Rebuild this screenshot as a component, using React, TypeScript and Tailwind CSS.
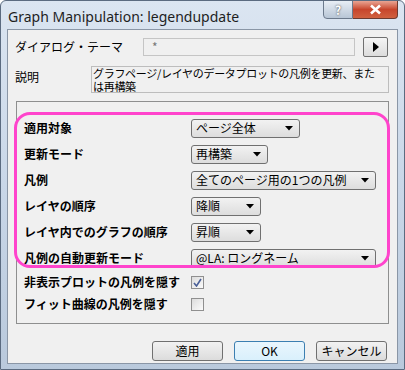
import React from 'react';

const jp = { fontFamily: '"Noto Sans CJK JP", "Liberation Sans", sans-serif' };

function Dropdown({ value, width }: { value: string; width: string }) {
  return (
    <div
      className={`${width} h-[19px] flex items-center justify-between pl-[4px] pr-[6px] rounded-[3px] border border-[#707070] bg-gradient-to-b from-[#f2f2f2] to-[#dddddd] text-[12px] leading-none text-black`}
    >
      <span>{value}</span>
      <svg width="8" height="5" viewBox="0 0 8 5">
        <path d="M0 0 H8 L4 4.5 Z" fill="#000" />
      </svg>
    </div>
  );
}

function Row({ label, h = 'h-[26px]', children }: { label: string; h?: string; children: React.ReactNode }) {
  return (
    <div className={`${h} flex items-center`}>
      <div className="w-[167px] text-[12px] font-bold text-black">{label}</div>
      {children}
    </div>
  );
}

function Check({ checked }: { checked?: boolean }) {
  return (
    <div className="w-[13px] h-[13px] border border-[#8f8f8f] bg-gradient-to-br from-[#dcdcdc] to-[#fbfbfb] flex items-center justify-center">
      {checked && (
        <svg width="9" height="9" viewBox="0 0 9 9">
          <path d="M1 5 L3.5 8 L8 1" stroke="#4a5f97" strokeWidth="1.6" fill="none" />
        </svg>
      )}
    </div>
  );
}

function Btn({ label, primary }: { label: string; primary?: boolean }) {
  return (
    <div
      className={`w-[71px] h-[20px] flex items-center justify-center rounded-[3px] border text-[12px] text-black bg-gradient-to-b ${
        primary ? 'border-[#3c7fb1] from-[#eaf6fd] to-[#d9f0fc]' : 'border-[#707070] from-[#f2f2f2] to-[#dcdcdc]'
      }`}
    >
      {label}
    </div>
  );
}

export default function App() {
  return (
    <div
      className="w-[405px] h-[370px] relative overflow-hidden rounded-t-[6px] bg-gradient-to-b from-[#dbe5f1] via-[#c9d7e8] to-[#b9c9dc] border border-[#5b6b80]"
      style={jp}
    >
      {/* title bar */}
      <div className="h-[28px] flex items-start justify-between">
        <div className="pl-[7px] pt-[5px] text-[14px] text-[#1e1e1e]" style={{ fontFamily: '"Noto Sans", "Liberation Sans", sans-serif' }}>
          Graph Manipulation: legendupdate
        </div>
        <div className="flex mr-[6px] -mt-px">
          <div className="w-[30px] h-[19px] flex items-center justify-center rounded-bl-[4px] border border-[#6c7a8c] bg-gradient-to-b from-[#e8eef5] to-[#b8c6d6] text-[12px] font-bold text-white" style={{ textShadow: '0 0 2px #333' }}>
            ?
          </div>
          <div className="w-[45px] h-[19px] flex items-center justify-center rounded-br-[4px] border border-l-0 border-[#6c3a30] bg-gradient-to-b from-[#e8a493] via-[#c7452c] to-[#d0603f]">
            <svg width="13" height="11" viewBox="0 0 13 11">
              <path d="M2 1.5 L11 9.5 M11 1.5 L2 9.5" stroke="#fff" strokeWidth="2.6" />
            </svg>
          </div>
        </div>
      </div>

      {/* client area */}
      <div className="mx-[6px] h-[335px] bg-[#f0f0f0] border border-[#8a96a6] flex flex-col">
        {/* theme / description */}
        <div className="px-[7px] pt-[7px]">
          <div className="flex items-center h-[20px]">
            <div className="w-[128px] text-[12px] text-black">ダイアログ・テーマ</div>
            <div className="w-[212px] h-[18px] border border-[#c5c5c5] bg-[#f0f0f0] flex items-center pl-[8px] text-[12px] text-[#777]">*</div>
            <div className="ml-[8px] w-[25px] h-[20px] border border-[#707070] rounded-[2px] bg-gradient-to-b from-[#f5f5f5] to-[#dcdcdc] flex items-center justify-center">
              <svg width="8" height="10" viewBox="0 0 8 10">
                <path d="M1 0 L7 5 L1 10 Z" fill="#000" />
              </svg>
            </div>
          </div>
          <div className="flex mt-[9px]">
            <div className="w-[76px] text-[12px] text-black pt-[2px]">説明</div>
            <div className="w-[298px] h-[27px] border border-[#bdbdbd] text-[11px] leading-[12.5px] tracking-[-0.3px] whitespace-nowrap text-black px-[1px]">
              <div>グラフページ/レイヤのデータプロットの凡例を更新、また</div>
              <div>は再構築</div>
            </div>
          </div>
        </div>

        {/* settings panel */}
        <div className="relative mt-[8px] ml-[8px] w-[373px] h-[223px] border border-[#8e8f8f] pl-[7px] pt-[13px]">
          <Row label="適用対象"><Dropdown value="ページ全体" width="w-[109px]" /></Row>
          <Row label="更新モード"><Dropdown value="再構築" width="w-[77px]" /></Row>
          <Row label="凡例"><Dropdown value="全てのページ用の1つの凡例" width="w-[185px]" /></Row>
          <Row label="レイヤの順序"><Dropdown value="降順" width="w-[70px]" /></Row>
          <Row label="レイヤ内でのグラフの順序"><Dropdown value="昇順" width="w-[70px]" /></Row>
          <Row label="凡例の自動更新モード"><Dropdown value="@LA: ロングネーム" width="w-[185px]" /></Row>
          <Row label="非表示プロットの凡例を隠す" h="h-[22px]"><Check checked /></Row>
          <Row label="フィット曲線の凡例を隠す" h="h-[22px]"><Check /></Row>

          {/* highlight annotation */}
          <div className="absolute left-[-3px] top-[10px] w-[376px] h-[156px] border-[3px] border-[#ff44cc] rounded-[16px] pointer-events-none" />
        </div>

        {/* buttons */}
        <div className="flex justify-end gap-[11px] pr-[10px] mt-[17px]">
          <Btn label="適用" />
          <Btn label="OK" primary />
          <Btn label="キャンセル" />
        </div>
      </div>
    </div>
  );
}
